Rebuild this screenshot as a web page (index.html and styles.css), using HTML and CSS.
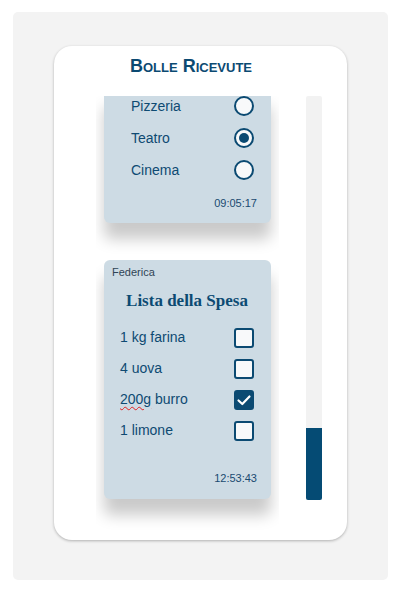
FILE: index.html
```html
<!DOCTYPE html>
<html lang="it">
<head>
<meta charset="utf-8">
<title>Bolle Ricevute</title>
<link rel="stylesheet" href="styles.css">
</head>
<body>
<div class="panel">
  <div class="card">
    <h1 class="title">Bolle Ricevute</h1>
    <div class="body">
      <div class="list">
        <div class="inner">
          <div class="note note-poll">
            <div class="row poll-row"><span>Pizzeria</span><span class="radio"></span></div>
            <div class="row poll-row"><span>Teatro</span><span class="radio checked"></span></div>
            <div class="row poll-row"><span>Cinema</span><span class="radio"></span></div>
            <div class="time time-poll">09:05:17</div>
          </div>
          <div class="note note-list">
            <div class="author">Federica</div>
            <div class="note-title">Lista della Spesa</div>
            <div class="row list-row"><span>1 kg farina</span><span class="check"></span></div>
            <div class="row list-row"><span>4 uova</span><span class="check"></span></div>
            <div class="row list-row"><span><span class="typo">200g</span> burro</span><span class="check checked"><svg viewBox="0 0 20 20" width="20" height="20"><polyline points="4.5,10.5 8.3,14 15.5,6.5" fill="none" stroke="#ffffff" stroke-width="2.2" stroke-linecap="round" stroke-linejoin="round"/></svg></span></div>
            <div class="row list-row"><span>1 limone</span><span class="check"></span></div>
            <div class="time time-list">12:53:43</div>
          </div>
        </div>
      </div>
      <div class="scrollbar"><div class="thumb"></div></div>
    </div>
  </div>
</div>
</body>
</html>
```
FILE: styles.css
```css
html, body {
  margin: 0;
  padding: 0;
  background: #ffffff;
  font-family: "Liberation Sans", Arial, sans-serif;
}

.panel {
  margin: 12px 0 0 13px;
  width: 375px;
  height: 568px;
  background: #f3f3f3;
  border-radius: 5px;
  padding: 34px 0 0 41px;
  box-sizing: border-box;
}

.card {
  width: 293px;
  height: 494px;
  background: #ffffff;
  border-radius: 18px;
  box-shadow: 0 1px 3px rgba(0, 0, 0, 0.28);
  display: flex;
  flex-direction: column;
  padding-top: 10px;
  box-sizing: border-box;
}

.title {
  margin: 0 19px 19px 0;
  font-size: 18px;
  line-height: 21px;
  font-weight: bold;
  font-variant: small-caps;
  text-align: center;
  color: #0b4a72;
}

.body {
  display: flex;
  height: 434px;
  padding-left: 42px;
}

.list {
  width: 183px;
  height: 434px;
  overflow: hidden;
  padding: 0 8px;
  box-sizing: border-box;
}

.inner {
  margin-top: -6px;
}

.note {
  background: #cddbe4;
  border-radius: 6px;
  box-shadow: 0 16px 15px rgba(0, 0, 0, 0.21);
  color: #0e4a72;
}

.note-poll {
  padding: 0 17px 13px 27px;
}

.note-list {
  margin-top: 37px;
  padding: 6px 17px 14px 16px;
}

.row {
  display: flex;
  align-items: center;
  justify-content: space-between;
  font-size: 14px;
}

.list-row > span:first-child {
  margin-top: -1px;
}

.poll-row {
  height: 32px;
}

.list-row {
  height: 31px;
}

.radio {
  width: 20px;
  height: 20px;
  box-sizing: border-box;
  border: 2px solid #0b4a72;
  border-radius: 50%;
  background: #f8f9fa;
  display: flex;
  align-items: center;
  justify-content: center;
}

.radio.checked::after {
  content: "";
  width: 10px;
  height: 10px;
  border-radius: 50%;
  background: #0b4a72;
}

.check {
  width: 20px;
  height: 20px;
  box-sizing: border-box;
  border: 2px solid #0b4a72;
  border-radius: 3px;
  background: #f8f9fa;
  display: flex;
  align-items: center;
  justify-content: center;
}

.check.checked {
  background: #0b4a72;
}

.check svg {
  flex: none;
}

.typo {
  text-decoration: underline wavy #e02020;
  text-decoration-thickness: 1px;
  text-underline-offset: 2px;
}

.time {
  font-size: 11px;
  line-height: 13px;
  text-align: right;
  color: #1a4a70;
}

.time-poll {
  margin: 11px -3px 0 0;
}

.time-list {
  margin: 26px -3px 0 0;
}

.author {
  font-size: 11px;
  line-height: 13px;
  color: #2f4455;
  margin-left: -8px;
}

.note-title {
  margin-top: 10px;
  height: 24px;
  line-height: 24px;
  font-family: "Liberation Serif", "Times New Roman", serif;
  font-weight: bold;
  font-size: 17px;
  white-space: nowrap;
  text-align: center;
  color: #0b4a72;
  margin-bottom: 9px;
}

.scrollbar {
  margin-left: 27px;
  width: 16px;
  height: 404px;
  background: #f2f2f2;
  border-radius: 2px 2px 0 0;
  display: flex;
  flex-direction: column;
  justify-content: flex-end;
}

.thumb {
  height: 72px;
  background: #054b74;
  border-radius: 0 0 2px 2px;
}
```
